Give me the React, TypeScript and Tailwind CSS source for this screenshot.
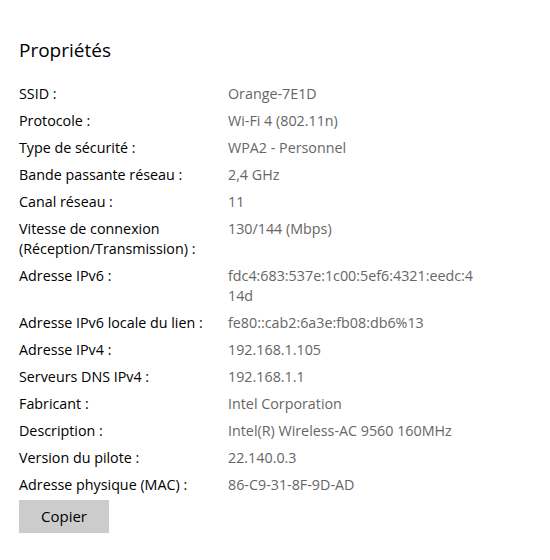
import React from "react";

const rows: [string[], string[]][] = [
  [["SSID :"], ["Orange-7E1D"]],
  [["Protocole :"], ["Wi-Fi 4 (802.11n)"]],
  [["Type de sécurité :"], ["WPA2 - Personnel"]],
  [["Bande passante réseau :"], ["2,4 GHz"]],
  [["Canal réseau :"], ["11"]],
  [["Vitesse de connexion", "(Réception/Transmission) :"], ["130/144 (Mbps)"]],
  [["Adresse IPv6 :"], ["fdc4:683:537e:1c00:5ef6:4321:eedc:4", "14d"]],
  [["Adresse IPv6 locale du lien :"], ["fe80::cab2:6a3e:fb08:db6%13"]],
  [["Adresse IPv4 :"], ["192.168.1.105"]],
  [["Serveurs DNS IPv4 :"], ["192.168.1.1"]],
  [["Fabricant :"], ["Intel Corporation"]],
  [["Description :"], ["Intel(R) Wireless-AC 9560 160MHz"]],
  [["Version du pilote :"], ["22.140.0.3"]],
  [["Adresse physique (MAC) :"], ["86-C9-31-8F-9D-AD"]],
];

export default function App() {
  return (
    <div
      className="w-[550px] h-[560px] bg-white pl-[19px] pt-[36px]"
      style={{ fontFamily: '"Open Sans", "Noto Sans", sans-serif' }}
    >
      <h1 className="text-[19px] leading-[28px] text-black mb-[20px]">Propriétés</h1>
      <div className="flex flex-col">
        {rows.map(([label, value], i) => (
          <div key={i} className="flex pb-[7px]">
            <div className="w-[209px] shrink-0 text-[14.3px] leading-[20px] text-black">
              {label.map((l, j) => (
                <div key={j}>{l}</div>
              ))}
            </div>
            <div className="text-[14.3px] leading-[20px] text-[#666666]">
              {value.map((v, j) => (
                <div key={j}>{v}</div>
              ))}
            </div>
          </div>
        ))}
      </div>
      <button className="-mt-[2px] w-[90px] h-[33px] bg-[#cccccc] text-[15px] text-black">
        Copier
      </button>
    </div>
  );
}
